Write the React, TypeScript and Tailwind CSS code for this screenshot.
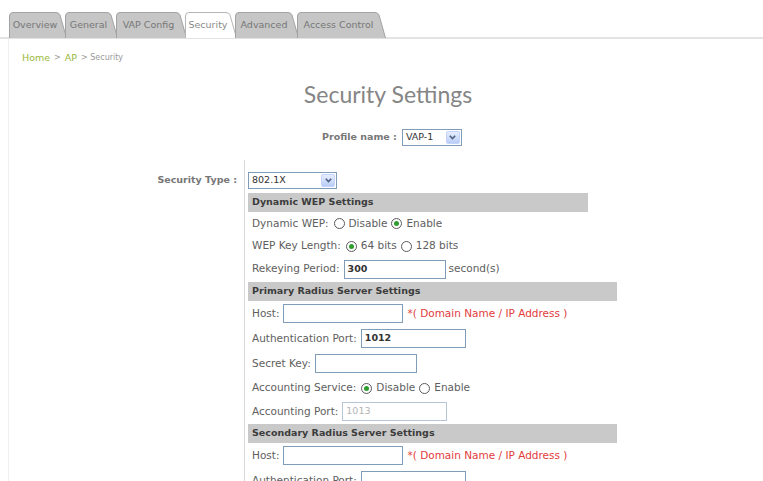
import * as React from "react";

type Tab = { label: string; w: number; active?: boolean };

const tabs: Tab[] = [
  { label: "Overview", w: 58 },
  { label: "General", w: 53 },
  { label: "VAP Config", w: 71 },
  { label: "Security", w: 52, active: true },
  { label: "Advanced", w: 64 },
  { label: "Access Control", w: 89 },
];

function TabItem({ tab, first }: { tab: Tab; first: boolean }) {
  const { w, active } = tab;
  const d = `M0.5 26 L0.5 4 Q0.5 0.5 4 0.5 L${w - 11} 0.5 Q${w - 8} 0.5 ${w - 7} 3 L${w - 0.5} 26`;
  return (
    <div
      className={`relative h-[26px] flex items-center justify-center pr-[6px] ${first ? "" : "-ml-[2px]"}`}
      style={{ width: w }}
    >
      <svg className="absolute inset-0" width={w} height={26}>
        <path d={d} fill={active ? "#ffffff" : "#c6c6c6"} stroke={active ? "#b5b5b5" : "#a3a3a3"} />
      </svg>
      <span className={`relative text-[9.5px] ${active ? "text-[#8a8a8a]" : "text-[#777]"}`}>{tab.label}</span>
    </div>
  );
}

function Select({ value, w }: { value: string; w: number }) {
  return (
    <div className="h-[17px] flex items-center justify-between border border-[#7f9db9] bg-white" style={{ width: w }}>
      <span className="pl-[3px] text-[9.5px] text-[#333]">{value}</span>
      <span className="w-[14px] h-[13px] mr-px flex items-center justify-center rounded-[2px] border border-[#c3d3fd] bg-gradient-to-b from-[#e6eefc] to-[#b9cdf6]">
        <svg width="7" height="5" viewBox="0 0 7 5">
          <path d="M0.8 0.8 L3.5 3.6 L6.2 0.8" fill="none" stroke="#4d6185" strokeWidth="1.6" />
        </svg>
      </span>
    </div>
  );
}

function Radio({ checked }: { checked?: boolean }) {
  return (
    <span className="w-[11px] h-[11px] rounded-full border border-[#5a5a5a] bg-white flex items-center justify-center">
      {checked ? <span className="w-[5px] h-[5px] rounded-full bg-[#2e9d2e]" /> : null}
    </span>
  );
}

function TextBox({ value, w, disabled }: { value?: string; w: number; disabled?: boolean }) {
  return (
    <div
      className={`h-[19px] ml-[4px] flex items-center border bg-white pl-[3px] text-[9.5px] ${
        disabled ? "border-[#b7c6d6] text-[#b5b5b5] font-normal" : "border-[#7f9db9] text-[#333] font-bold"
      }`}
      style={{ width: w }}
    >
      {value}
    </div>
  );
}

function Header({ title, w }: { title: string; w: number }) {
  return (
    <div className="h-[19px] mt-px flex items-center bg-[#c9c9c9] pl-[4px] text-[9.5px] font-bold text-[#3c3c3c]" style={{ width: w }}>
      {title}
    </div>
  );
}

function Row({ h, children }: { h: number; children: React.ReactNode }) {
  return (
    <div className="flex items-center pl-[4px] text-[10.5px] text-[#5e5e5e]" style={{ height: h }}>
      {children}
    </div>
  );
}

const domainHint = <span className="ml-[4px] text-[#e23b3b]">*( Domain Name / IP Address )</span>;

export default function App() {
  return (
    <div className="w-[763px] h-[481px] overflow-hidden bg-white font-['DejaVu_Sans',Verdana,sans-serif]">
      {/* tab strip */}
      <div className="h-[39px] pt-[12px] pl-[9px] border-b-2 border-[#e3e3e3] flex">
        {tabs.map((t, i) => (
          <TabItem key={t.label} tab={t} first={i === 0} />
        ))}
      </div>

      <div className="ml-[8px] border-l border-[#f0f0f0]">
        {/* breadcrumb */}
        <div className="pt-[13px] pl-[13px] h-[25px] flex items-center gap-[4px] text-[9.5px]">
          <span className="text-[#9bb83a]">Home</span>
          <span className="text-[#999] text-[8px]">&gt;</span>
          <span className="text-[#9bb83a]">AP</span>
          <span className="text-[#999] text-[8px]">&gt; Security</span>
        </div>

        <div className="mt-[17px] h-[26px] flex items-center justify-center pl-[4px] font-['Lato',sans-serif] text-[23px] text-[#858585]">
          Security Settings
        </div>

        <div className="mt-[21px] h-[18px] flex items-center justify-center gap-[5px] pl-[12px]">
          <span className="text-[9.5px] font-bold text-[#777]">Profile name :</span>
          <Select value="VAP-1" w={60} />
        </div>

        {/* settings form */}
        <div className="mt-[14px] flex">
          <div className="w-[235px] pt-[13px] pr-[7px] text-right text-[9.5px] font-bold text-[#777]">Security Type :</div>
          <div className="border-l border-[#d9d9d9] pl-[3px] pt-[12px] h-[330px]">
            <Select value="802.1X" w={89} />
            <div className="mt-[4px]">
              <Header title="Dynamic WEP Settings" w={340} />
              <Row h={23}>
                <span>Dynamic WEP:</span>
                <span className="ml-[5px] flex items-center gap-[4px]">
                  <Radio /> <span>Disable</span>
                  <Radio checked /> <span>Enable</span>
                </span>
              </Row>
              <Row h={22}>
                <span>WEP Key Length:</span>
                <span className="ml-[5px] flex items-center gap-[4px]">
                  <Radio checked /> <span>64 bits</span>
                  <Radio /> <span>128 bits</span>
                </span>
              </Row>
              <Row h={24}>
                <span>Rekeying Period:</span>
                <TextBox value="300" w={102} />
                <span className="ml-[3px]">second(s)</span>
              </Row>

              <Header title="Primary Radius Server Settings" w={369} />
              <Row h={25}>
                <span>Host:</span>
                <TextBox w={120} />
                {domainHint}
              </Row>
              <Row h={25}>
                <span>Authentication Port:</span>
                <TextBox value="1012" w={105} />
              </Row>
              <Row h={25}>
                <span>Secret Key:</span>
                <TextBox w={102} />
              </Row>
              <Row h={24}>
                <span>Accounting Service:</span>
                <span className="ml-[5px] flex items-center gap-[4px]">
                  <Radio checked /> <span>Disable</span>
                  <Radio /> <span>Enable</span>
                </span>
              </Row>
              <Row h={23}>
                <span>Accounting Port:</span>
                <TextBox value="1013" w={105} disabled />
              </Row>

              <Header title="Secondary Radius Server Settings" w={369} />
              <Row h={25}>
                <span>Host:</span>
                <TextBox w={120} />
                {domainHint}
              </Row>
              <Row h={25}>
                <span>Authentication Port:</span>
                <TextBox w={105} />
              </Row>
            </div>
          </div>
        </div>
      </div>
    </div>
  );
}
